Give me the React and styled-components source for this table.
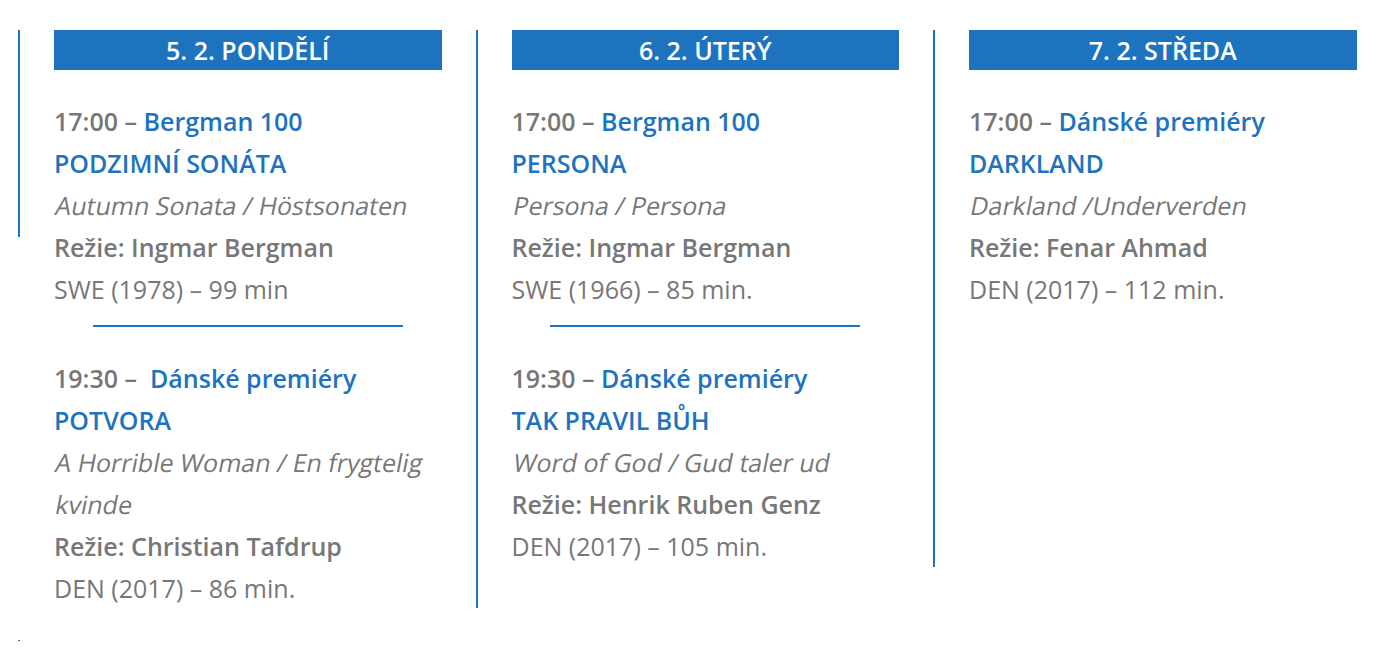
import React from "react";
import styled, { createGlobalStyle } from "styled-components";

const Global = createGlobalStyle`
  html, body { margin: 0; padding: 0; background: #fff; }
  body { font-family: "Open Sans", "Liberation Sans", sans-serif; }
`;

const BLUE = "#1e73be";
const GRAY = "#777777";

const Page = styled.div`
  padding: 30px 0 0 18px;
`;

const Row = styled.div`
  display: flex;
  align-items: flex-start;
`;

const Divider = styled.div`
  flex: 0 0 2px;
  width: 2px;
  height: ${(p) => p.$h}px;
  background: ${BLUE};
`;

const Column = styled.section`
  flex: 0 0 387.5px;
  width: 387.5px;
  margin: 0 34px;
`;

const DayHeader = styled.h2`
  margin: 0 0 30px;
  height: 40px;
  background: ${BLUE};
  color: #fff;
  font-size: 25px;
  font-weight: 600;
  line-height: 40px;
  text-align: center;
`;

const Screening = styled.div`
  font-size: 25px;
  line-height: 42px;
  color: ${GRAY};
`;

const Line = styled.div`
  font-weight: ${(p) => p.$weight || 400};
  color: ${(p) => (p.$blue ? BLUE : GRAY)};
`;

const Oblique = styled.span`
  display: inline-block;
  font-weight: 400;
  transform: skewX(-11deg);
  transform-origin: 0 75%;
`;

const Accent = styled.span`
  color: ${BLUE};
`;

const Separator = styled.hr`
  width: 80%;
  height: 2px;
  border: 0;
  margin: 15px auto 30px;
  background: ${BLUE};
`;

const Footer = styled.div`
  margin-top: 31px;
`;

const days = [
  {
    title: "5. 2. PONDĚLÍ",
    divider: 207,
    items: [
      {
        time: "17:00 – ",
        series: "Bergman 100",
        film: "PODZIMNÍ SONÁTA",
        orig: ["Autumn Sonata / Höstsonaten"],
        director: "Režie: Ingmar Bergman",
        info: "SWE (1978) – 99 min",
      },
      {
        time: "19:30 –\u00a0 ",
        series: "Dánské premiéry",
        film: "POTVORA",
        orig: ["A Horrible Woman / En frygtelig", "kvinde"],
        director: "Režie: Christian Tafdrup",
        info: "DEN (2017) – 86 min.",
      },
    ],
  },
  {
    title: "6. 2. ÚTERÝ",
    divider: 578,
    items: [
      {
        time: "17:00 – ",
        series: "Bergman 100",
        film: "PERSONA",
        orig: ["Persona / Persona"],
        director: "Režie: Ingmar Bergman",
        info: "SWE (1966) – 85 min.",
      },
      {
        time: "19:30 – ",
        series: "Dánské premiéry",
        film: "TAK PRAVIL BŮH",
        orig: ["Word of God / Gud taler ud"],
        director: "Režie: Henrik Ruben Genz",
        info: "DEN (2017) – 105 min.",
      },
    ],
  },
  {
    title: "7. 2. STŘEDA",
    divider: 537,
    items: [
      {
        time: "17:00 – ",
        series: "Dánské premiéry",
        film: "DARKLAND",
        orig: ["Darkland /Underverden"],
        director: "Režie: Fenar Ahmad",
        info: "DEN (2017) – 112 min.",
      },
    ],
  },
];

export default function App() {
  return (
    <>
      <Global />
      <Page>
        <Row>
          {days.map((d) => (
            <React.Fragment key={d.title}>
              <Divider $h={d.divider} />
              <Column>
                <DayHeader>{d.title}</DayHeader>
                {d.items.map((it, i) => (
                  <React.Fragment key={it.film}>
                    {i > 0 && <Separator />}
                    <Screening>
                      <Line $weight={600}>
                        {it.time}
                        <Accent>{it.series}</Accent>
                      </Line>
                      <Line $weight={600} $blue>
                        {it.film}
                      </Line>
                      {it.orig.map((o) => (
                        <Line key={o}>
                          <Oblique>{o}</Oblique>
                        </Line>
                      ))}
                      <Line $weight={600}>{it.director}</Line>
                      <Line>{it.info}</Line>
                    </Screening>
                  </React.Fragment>
                ))}
              </Column>
            </React.Fragment>
          ))}
        </Row>
        <Footer>
          <Divider $h={1} />
        </Footer>
      </Page>
    </>
  );
}
